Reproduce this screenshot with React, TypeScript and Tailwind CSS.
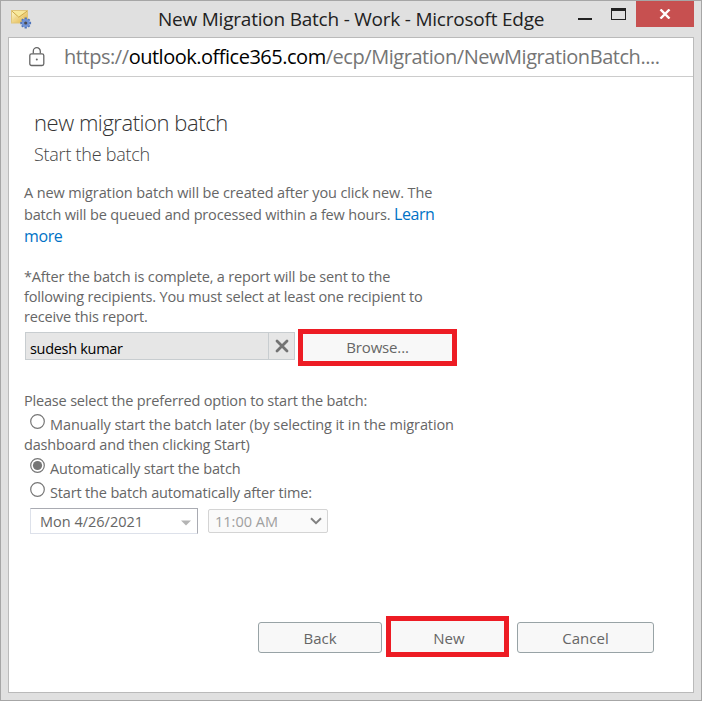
import React, { useState } from 'react';

function MailGearIcon() {
  return (
    <svg width="21" height="20" viewBox="0 0 21 20" className="block">
      <defs>
        <linearGradient id="mail" x1="0" y1="0" x2="1" y2="1">
          <stop offset="0" stopColor="#fffbd0" />
          <stop offset="1" stopColor="#dfae3c" />
        </linearGradient>
      </defs>
      <rect x="0.5" y="0.5" width="16" height="12.5" fill="url(#mail)" stroke="#e0c67c" />
      <path d="M1 1.2L7.8 7.2L16 1.2" fill="#f8e99a" stroke="#c9a040" strokeWidth="0.9" />
      <path d="M1 12.5L6 6.5M16 12.5L10.5 6.5" fill="none" stroke="#efd58a" />
      <path d="M14.7 7.6V18.4M9.3 13H20.1M10.9 9.2L18.5 16.8M18.5 9.2L10.9 16.8" stroke="#4f74bb" strokeWidth="2.3" />
      <circle cx="14.7" cy="13" r="3.9" fill="#6f92d6" />
      <circle cx="14.7" cy="13" r="1.6" fill="#4a4a50" />
    </svg>
  );
}

function Line({ className, children }) {
  return <div className={`whitespace-nowrap ${className}`}>{children}</div>;
}

function Radio({ checked, onClick }) {
  return (
    <button onClick={onClick} className="relative -top-[4px] left-[6px] block h-[15px] w-[15px] shrink-0">
      <svg width="15" height="15" viewBox="0 0 15 15" className="block">
        <circle cx="7.5" cy="7.5" r="6.8" fill="#fff" stroke="#767676" strokeWidth="1.2" />
        {checked && <circle cx="7.5" cy="7.5" r="4.6" fill="#767676" />}
      </svg>
    </button>
  );
}

export default function App() {
  const [option, setOption] = useState('auto');

  return (
    <div className="flex h-[701px] w-[702px] flex-col border border-[#a6a6a6] bg-[#e0e0e0] pb-[7px] pl-[7px] font-['Open_Sans',sans-serif] text-[14.5px] tracking-[-0.16px] text-[#666]">
      {/* title bar */}
      <div className="flex h-9 shrink-0 items-start">
        <div className="w-[150px] pl-[3px] pt-[9px]">
          <MailGearIcon />
        </div>
        <Line className="w-[420px] pt-[6px] text-[19px] leading-6 tracking-[-0.22px] text-[#222]">
          New Migration Batch - Work - Microsoft Edge
        </Line>
        <div className="mt-[17px] h-[2px] w-[14px] bg-[#222]"></div>
        <div className="ml-[19px] mt-[7px] h-[12px] w-[15px] border border-t-[3px] border-[#222]"></div>
        <button className="ml-[10px] flex h-[26px] w-[58px] items-center justify-center bg-[#c75050]">
          <svg width="12" height="10" viewBox="0 0 12 10">
            <path d="M1.5 0.5L10.5 9.5M10.5 0.5L1.5 9.5" stroke="#fff" strokeWidth="2.4" />
          </svg>
        </button>
      </div>

      <div className="flex w-[686px] flex-1 flex-col border border-[#bababa] bg-white">
        {/* address bar */}
        <div className="flex h-[39px] shrink-0 items-center border-b border-[#ccc]">
          <svg width="16" height="20" viewBox="0 0 16 20" fill="none" stroke="#666" strokeWidth="1.3" className="-mt-px ml-[20px]">
            <rect x="0.8" y="6.8" width="14" height="11.7" rx="1.8" />
            <path d="M4.3 6.5V4.2A3.5 3.5 0 0 1 11.3 4.2V6.5" />
            <circle cx="7.8" cy="12.5" r="1" fill="#666" stroke="none" />
          </svg>
          <Line className="ml-[19px] text-[20px] leading-7 tracking-[-0.45px] text-[#757575]">
            https://<span className="tracking-[-0.49px] text-black">outlook.office365.com</span>/ecp/Migration/NewMigrationBatch....
          </Line>
        </div>

        <div className="flex flex-col pl-[15px] pt-[29px]">
          <Line className="pl-[10px] text-[22px] font-light leading-8 tracking-[-0.45px] text-[#333]">new migration batch</Line>
          <Line className="mt-px pl-[10px] text-[18px] font-light leading-[30px] tracking-[-0.25px] text-[#444]">Start the batch</Line>

          <div className="mt-[13px] leading-[22px]">
            <Line className="h-[22px] tracking-[-0.12px]">A new migration batch will be created after you click new. The</Line>
            <Line className="h-[22px]">
              batch will be queued and processed within a few hours. <a className="text-[16px] leading-none tracking-[-0.45px] text-[#0072c6]">Learn</a>
            </Line>
            <Line className="h-[22px] text-[16px] leading-[21px] tracking-[-0.4px] text-[#0072c6]">more</Line>
          </div>

          <div className="mt-[19px] leading-5">
            <Line className="">*After the batch is complete, a report will be sent to the</Line>
            <Line className="">following recipients. You must select at least one recipient to</Line>
            <Line className="">receive this report.</Line>
          </div>

          <div className="mt-[2px] flex h-[37px]">
            <div className="ml-px mt-[3px] flex h-[28px] w-[270px] border border-[#c8cdd0] bg-[#e6e6e6]">
              <Line className="w-[243px] border-r border-[#c8cdd0] pl-1 pt-[3px] leading-[26px] tracking-[-0.3px] text-black">sudesh kumar</Line>
              <button className="flex flex-1 items-center justify-center">
                <svg width="14" height="14" viewBox="0 0 14 14">
                  <path d="M2 2L12 12M12 2L2 12" stroke="#737373" strokeWidth="2.8" strokeLinecap="round" />
                </svg>
              </button>
            </div>
            <button className="ml-[3px] h-[37px] w-[159px] border-[5px] border-[#ed1c24] bg-[#f8f8f8] text-[15px]">Browse...</button>
          </div>

          <div className="mt-[24px]">
            <Line className="tracking-[-0.18px] leading-[22px]">Please select the preferred option to start the batch:</Line>
            <div className="mt-[3px] flex h-5 items-center">
              <Radio checked={option === 'manual'} onClick={() => setOption('manual')} />
              <Line className="pl-[11px] leading-5 tracking-[-0.1px]">Manually start the batch later (by selecting it in the migration</Line>
            </div>
            <Line className="leading-5">dashboard and then clicking Start)</Line>
            <div className="mt-[2px] flex h-6 items-center">
              <Radio checked={option === 'auto'} onClick={() => setOption('auto')} />
              <Line className="pl-[11px] tracking-[-0.14px]">Automatically start the batch</Line>
            </div>
            <div className="flex h-6 items-center">
              <Radio checked={option === 'time'} onClick={() => setOption('time')} />
              <Line className="pl-[11px]">Start the batch automatically after time:</Line>
            </div>
          </div>

          <div className="mt-[3px] flex items-center pl-[6px] tracking-normal">
            <div className="flex h-[26px] w-[168px] items-center justify-between border border-[#dde1ea] border-r-[#a9abb2] border-t-[#a9abb2] pl-[9px] pr-[6px]">
              <Line className="pt-px">Mon 4/26/2021</Line>
              <svg width="10" height="6" viewBox="0 0 10 6" className="mt-[3px]">
                <path d="M0 0.5H10L5 5.5Z" fill="#b4b4b4" />
              </svg>
            </div>
            <div className="ml-[10px] flex h-[24px] w-[120px] items-center justify-between rounded-[2px] border border-[#d4d4d4] bg-[#fafafa] pl-[6px] pr-[5px] text-[#a0a0a0]">
              <Line className="pt-px">11:00 AM</Line>
              <svg width="12" height="8" viewBox="0 0 12 8" fill="none" stroke="#808080" strokeWidth="2">
                <path d="M1 1.2L6 6.2L11 1.2" />
              </svg>
            </div>
          </div>
        </div>

        {/* footer buttons */}
        <div className="mb-[35px] mt-auto flex h-[41px] items-center pl-[249px] text-[15px] tracking-normal">
          <button className="mt-[2px] h-[31px] w-[124px] rounded-[3px] border border-[#98a3a6] bg-[#f8f8f8] pt-px">Back</button>
          <button className="ml-1 h-[41px] w-[123px] border-[5px] border-[#ed1c24] bg-[#f8f8f8] pl-[3px] pt-[3px]">New</button>
          <button className="ml-2 mt-[2px] h-[31px] w-[137px] rounded-[3px] border border-[#98a3a6] bg-[#f8f8f8] pt-px">Cancel</button>
        </div>
      </div>
    </div>
  );
}
